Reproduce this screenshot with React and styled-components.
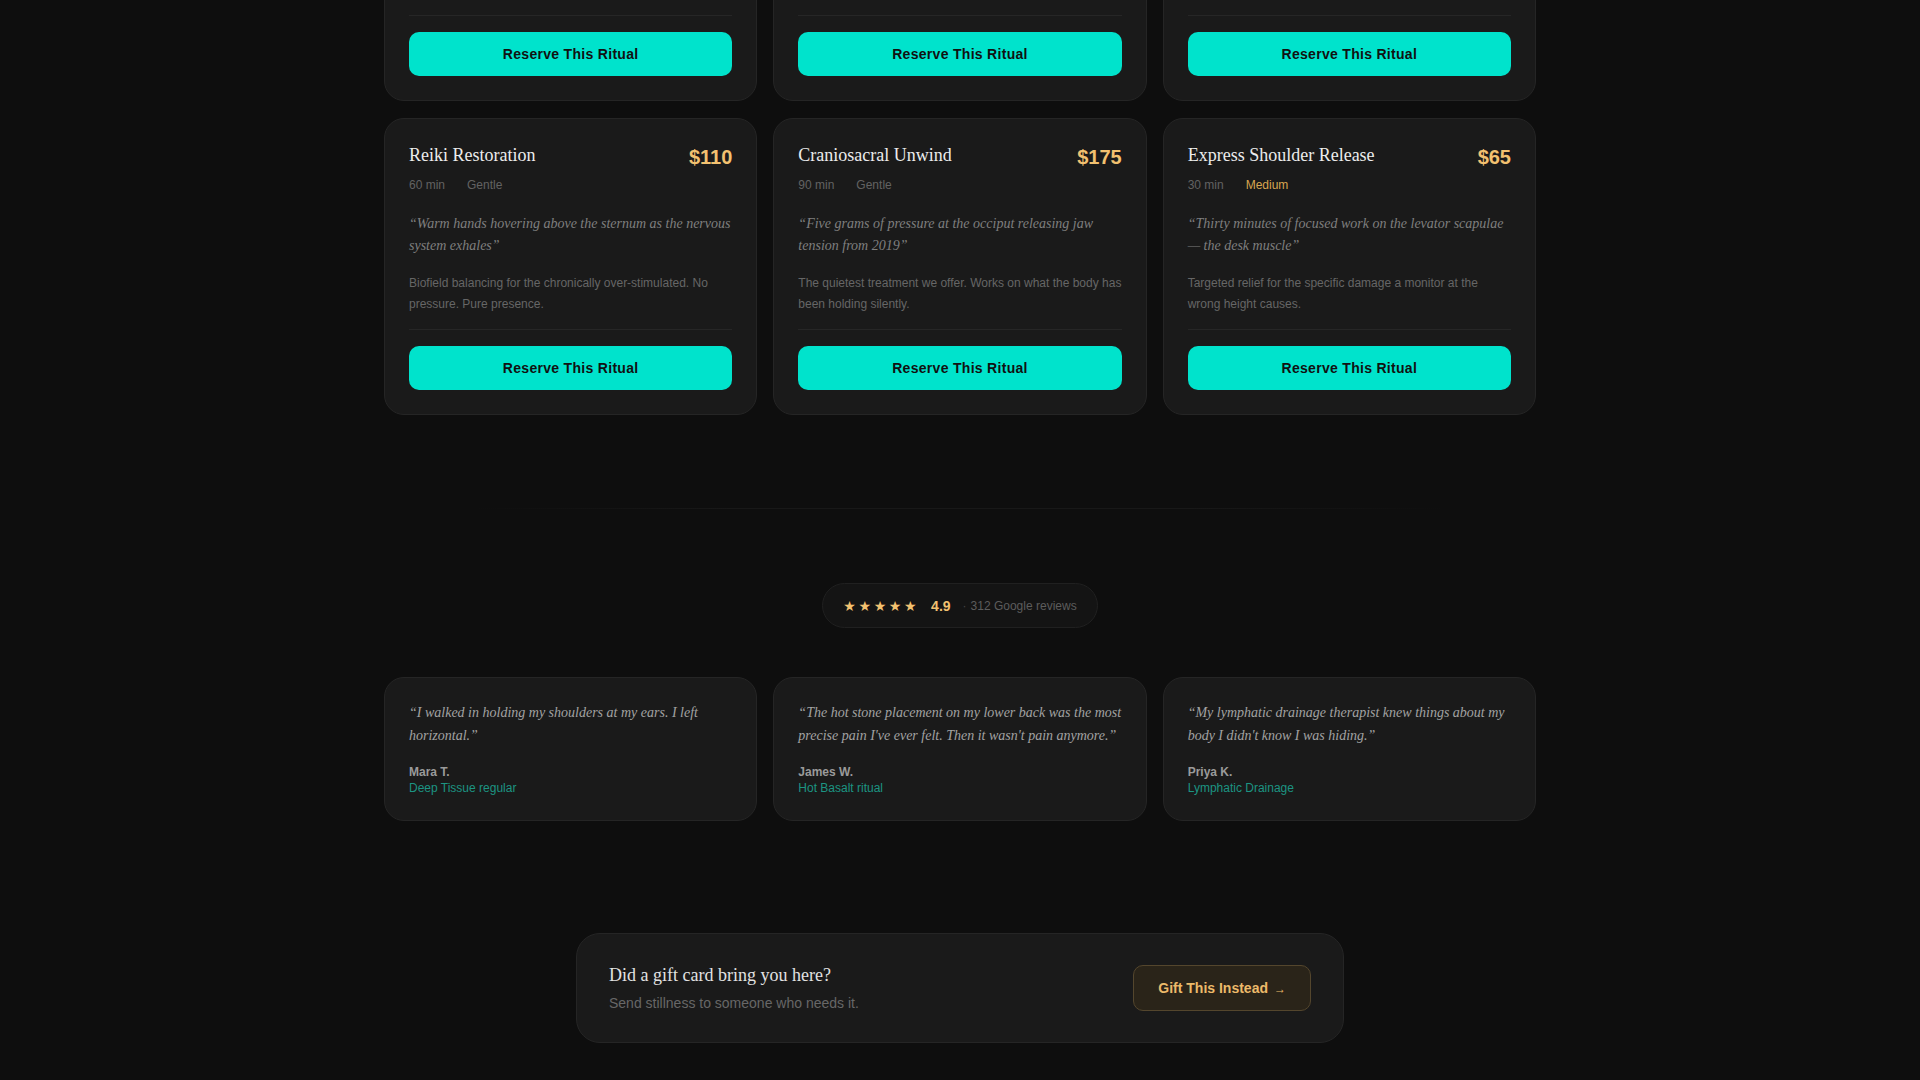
import React from "react";
import styled, { createGlobalStyle } from "styled-components";

const GlobalStyle = createGlobalStyle`
  html, body {
    margin: 0;
    padding: 0;
    background: #0e0e0e;
  }
  body {
    font-family: "Liberation Sans", Arial, sans-serif;
    color: #e6e6e6;
    -webkit-font-smoothing: antialiased;
  }
  * {
    box-sizing: border-box;
  }
`;

const Page = styled.main`
  width: 1152px;
  margin: -197px auto 0;
  padding-bottom: 80px;
`;

const RitualGrid = styled.section`
  display: grid;
  grid-template-columns: repeat(3, 1fr);
  gap: 17px 16px;
`;

const Card = styled.article`
  display: flex;
  flex-direction: column;
  background: #1a1a1a;
  border: 1px solid #252525;
  border-radius: 20px;
  padding: 24px;
`;

const CardHead = styled.div`
  display: flex;
  justify-content: space-between;
  align-items: flex-start;
  height: 28px;
`;

const Title = styled.h3`
  margin: 0;
  font-family: "Liberation Serif", "Times New Roman", serif;
  font-weight: 400;
  font-size: 18px;
  line-height: 24px;
  color: #ececec;
`;

const Price = styled.span`
  font-weight: 700;
  font-size: 20px;
  line-height: 28px;
  color: #f2c170;
`;

const Meta = styled.div`
  display: flex;
  gap: 22px;
  margin-top: 5px;
  font-size: 12px;
  line-height: 18px;
  color: #626262;
`;

const Intensity = styled.span`
  color: ${(p) => (p.$level === "Medium" ? "#d8a650" : "#626262")};
`;

const Quote = styled.p`
  margin: 19px 0 0;
  font-family: "Liberation Serif", "Times New Roman", serif;
  font-style: italic;
  font-size: 14px;
  line-height: 1.6;
  color: #7f7f7f;
`;

const Desc = styled.p`
  margin: 16px 0 0;
  font-size: 12px;
  line-height: 1.7;
  color: #666;
`;

const CardFoot = styled.div`
  margin-top: auto;
  padding-top: 16px;
  border-top: 1px solid #262626;
`;

const FootSpacer = styled.div`
  height: 15px;
`;

const ReserveButton = styled.button`
  width: 100%;
  height: 44px;
  border: 0;
  border-radius: 10px;
  background: #00e3cc;
  color: #111;
  font-family: "Liberation Sans", Arial, sans-serif;
  font-weight: 700;
  font-size: 14px;
  letter-spacing: 0.3px;
  cursor: pointer;
`;

const Divider = styled.hr`
  margin: 93px 0 0;
  height: 1px;
  border: 0;
  background: linear-gradient(90deg, transparent 8%, #181818 30%, #181818 70%, transparent 92%);
`;

const Reviews = styled.section`
  padding-top: 74px;
  display: flex;
  flex-direction: column;
  align-items: center;
`;

const RatingPill = styled.div`
  display: inline-flex;
  align-items: center;
  gap: 12px;
  height: 45px;
  padding: 0 20px;
  border: 1px solid #202020;
  border-radius: 999px;
  background: #141414;
`;

const Stars = styled.span`
  font-family: "DejaVu Sans", sans-serif;
  font-size: 14px;
  letter-spacing: 2.6px;
  color: #f2c170;
`;

const Score = styled.span`
  font-weight: 700;
  font-size: 14px;
  color: #f2c170;
`;

const ReviewCount = styled.span`
  font-size: 12px;
  color: #5c5c5c;

  b {
    font-weight: 400;
    color: #444;
    margin-right: 4px;
  }
`;

const ReviewGrid = styled.div`
  align-self: stretch;
  display: grid;
  grid-template-columns: repeat(3, 1fr);
  gap: 16px;
  margin-top: 49px;
`;

const ReviewCard = styled.figure`
  margin: 0;
  background: #1a1a1a;
  border: 1px solid #252525;
  border-radius: 20px;
  padding: 24px;
`;

const ReviewQuote = styled.blockquote`
  margin: 0;
  font-family: "Liberation Serif", "Times New Roman", serif;
  font-style: italic;
  font-size: 14px;
  line-height: 1.6;
  color: #a2a2a2;
`;

const Author = styled.figcaption`
  margin-top: 17px;
  font-size: 12px;
  line-height: 16px;
  font-weight: 700;
  color: #9a9a9a;
`;

const AuthorRitual = styled.div`
  font-weight: 400;
  color: #1c9482;
`;

const GiftCard = styled.section`
  width: 768px;
  margin: 112px auto 0;
  display: flex;
  justify-content: space-between;
  align-items: center;
  padding: 29px 32px;
  background: #1a1a1a;
  border: 1px solid #252525;
  border-radius: 24px;
`;

const GiftTitle = styled.h4`
  margin: 0;
  font-family: "Liberation Serif", "Times New Roman", serif;
  font-weight: 400;
  font-size: 18px;
  line-height: 24px;
  color: #e2e2e2;
`;

const GiftSub = styled.p`
  margin: 6px 0 0;
  font-size: 14px;
  line-height: 20px;
  color: #676767;
`;

const GiftButton = styled.button`
  height: 46px;
  padding: 0 24px;
  border: 1px solid #54462d;
  border-radius: 10px;
  background: #2a2419;
  color: #ecba6a;
  font-family: "Liberation Sans", Arial, sans-serif;
  font-weight: 700;
  font-size: 14px;
  cursor: pointer;

  span {
    font-weight: 400;
    font-size: 12px;
    margin-left: 6px;
  }
`;

const rituals = [
  {
    name: "Deep Tissue Reset",
    price: "$140",
    time: "60 min",
    level: "Deep",
    quote: "Elbows into the knots you stopped noticing years ago, slowly, until they let go",
    desc: "Sustained pressure through the back, neck and hips. Expect honest soreness the next day.",
  },
  {
    name: "Hot Basalt Ritual",
    price: "$160",
    time: "75 min",
    level: "Medium",
    quote: "Warm river stones resting along the spine while the heat does the talking",
    desc: "Heated basalt and long strokes for the kind of tension that lives under the shoulder blades.",
  },
  {
    name: "Lymphatic Drainage",
    price: "$120",
    time: "60 min",
    level: "Gentle",
    quote: "Feather-light rhythm that moves what sits still, from ankle to collarbone",
    desc: "A slow, rhythmic treatment for puffiness, heaviness and recovery after travel or surgery.",
  },
  {
    name: "Reiki Restoration",
    price: "$110",
    time: "60 min",
    level: "Gentle",
    quote: "Warm hands hovering above the sternum as the nervous system exhales",
    desc: "Biofield balancing for the chronically over-stimulated. No pressure. Pure presence.",
  },
  {
    name: "Craniosacral Unwind",
    price: "$175",
    time: "90 min",
    level: "Gentle",
    quote: "Five grams of pressure at the occiput releasing jaw tension from 2019",
    desc: "The quietest treatment we offer. Works on what the body has been holding silently.",
  },
  {
    name: "Express Shoulder Release",
    price: "$65",
    time: "30 min",
    level: "Medium",
    quote: "Thirty minutes of focused work on the levator scapulae — the desk muscle",
    desc: "Targeted relief for the specific damage a monitor at the wrong height causes.",
  },
];

const reviews = [
  {
    text: "I walked in holding my shoulders at my ears. I left horizontal.",
    name: "Mara T.",
    ritual: "Deep Tissue regular",
  },
  {
    text: "The hot stone placement on my lower back was the most precise pain I've ever felt. Then it wasn't pain anymore.",
    name: "James W.",
    ritual: "Hot Basalt ritual",
  },
  {
    text: "My lymphatic drainage therapist knew things about my body I didn't know I was hiding.",
    name: "Priya K.",
    ritual: "Lymphatic Drainage",
  },
];

const App = () => {
  return (
    <>
      <GlobalStyle />
      <Page>
        <RitualGrid>
          {rituals.map((r) => (
            <Card key={r.name}>
              <CardHead>
                <Title>{r.name}</Title>
                <Price>{r.price}</Price>
              </CardHead>
              <Meta>
                <span>{r.time}</span>
                <Intensity $level={r.level}>{r.level}</Intensity>
              </Meta>
              <Quote>“{r.quote}”</Quote>
              <Desc>{r.desc}</Desc>
              <FootSpacer />
              <CardFoot>
                <ReserveButton>Reserve This Ritual</ReserveButton>
              </CardFoot>
            </Card>
          ))}
        </RitualGrid>

        <Divider />

        <Reviews>
          <RatingPill>
            <Stars>★★★★★</Stars>
            <Score>4.9</Score>
            <ReviewCount>
              <b>·</b>312 Google reviews
            </ReviewCount>
          </RatingPill>

          <ReviewGrid>
            {reviews.map((r) => (
              <ReviewCard key={r.name}>
                <ReviewQuote>“{r.text}”</ReviewQuote>
                <Author>
                  {r.name}
                  <AuthorRitual>{r.ritual}</AuthorRitual>
                </Author>
              </ReviewCard>
            ))}
          </ReviewGrid>
        </Reviews>

        <GiftCard>
          <div>
            <GiftTitle>Did a gift card bring you here?</GiftTitle>
            <GiftSub>Send stillness to someone who needs it.</GiftSub>
          </div>
          <GiftButton>
            Gift This Instead<span>→</span>
          </GiftButton>
        </GiftCard>
      </Page>
    </>
  );
};

export default App;
